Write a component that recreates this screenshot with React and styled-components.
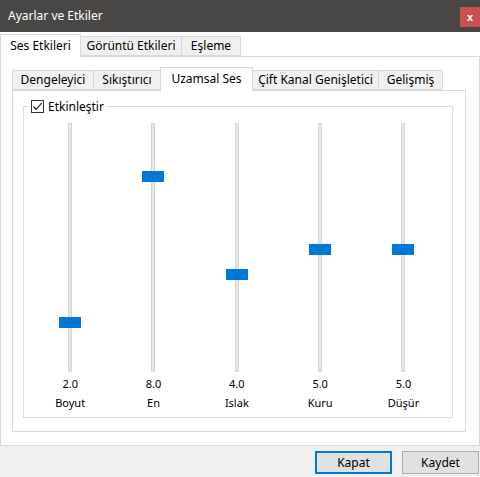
import React from 'react';
import styled, { createGlobalStyle } from 'styled-components';

const GlobalStyle = createGlobalStyle`
  html, body { margin: 0; padding: 0; background: #f0f0f0; }
  body { font-family: 'Segoe UI', 'Noto Sans', sans-serif; font-size: 12px; color: #000; }
  * { box-sizing: border-box; }
`;

const OUTER_TABS = [
  { label: 'Ses Etkileri', width: 81, active: true },
  { label: 'Görüntü Etkileri', width: 102 },
  { label: 'Eşleme', width: 60 },
];

const INNER_TABS = [
  { label: 'Dengeleyici', width: 82 },
  { label: 'Sıkıştırıcı', width: 68 },
  { label: 'Uzamsal Ses', width: 93, active: true },
  { label: 'Çift Kanal Genişletici', width: 127 },
  { label: 'Gelişmiş', width: 65 },
];

const SLIDERS = [
  { label: 'Boyut', value: 2 },
  { label: 'En', value: 8 },
  { label: 'Islak', value: 4 },
  { label: 'Kuru', value: 5 },
  { label: 'Düşür', value: 5 },
];

const Window = styled.div`
  width: 480px;
  height: 477px;
  display: flex;
  flex-direction: column;
  background: #f0f0f0;
  overflow: hidden;
`;

const TitleBar = styled.div`
  height: 32px;
  flex: none;
  display: flex;
  justify-content: space-between;
  background: #494745;
  color: #fff;
`;

const Title = styled.div`
  padding-left: 8px;
  line-height: 32px;
  font-size: 12px;
`;

const CloseButton = styled.div`
  width: 20px;
  height: 20px;
  margin-top: 7px;
  background: #c75050;
  color: #fff;
  font-size: 11px;
  font-weight: 700;
  display: flex;
  align-items: center;
  justify-content: center;
  font-family: 'Liberation Sans', sans-serif;
`;

const TabStrip = styled.div`
  height: ${({ $height }) => $height}px;
  flex: none;
  display: flex;
  align-items: flex-end;
  background: #fff;
`;

const Tab = styled.div`
  width: ${({ $width }) => $width}px;
  height: ${({ $active, $tall }) => ($active ? $tall : 20)}px;
  margin-left: -1px;
  margin-bottom: ${({ $active }) => ($active ? -1 : 0)}px;
  &:first-child { margin-left: 0; }
  position: relative;
  z-index: ${({ $active }) => ($active ? 1 : 0)};
  display: flex;
  align-items: ${({ $active }) => ($active ? 'flex-start' : 'center')};
  padding-top: ${({ $active }) => ($active ? 3 : 0)}px;
  justify-content: center;
  background: ${({ $active }) => ($active ? '#fff' : '#f0f0f0')};
  border: 1px solid #d9d9d9;
  border-bottom: ${({ $active }) => ($active ? 'none' : '1px solid #d9d9d9')};
  white-space: nowrap;
  line-height: 16px;
`;

const OuterPanel = styled.div`
  height: 390px;
  flex: none;
  background: #fff;
  border: 1px solid #d9d9d9;
  padding: 10px 13px 13px 11px;
  display: flex;
  flex-direction: column;
`;

const InnerPanel = styled.div`
  flex: 1;
  background: #fff;
  border: 1px solid #d9d9d9;
  padding: 9px 12px 13px 10px;
  display: flex;
`;

const GroupBox = styled.fieldset`
  flex: 1;
  margin: 0;
  padding: 0 0 6px;
  border: 1px solid #dcdcdc;
  min-width: 0;
`;

const Legend = styled.legend`
  margin-left: 5px;
  padding: 0 3px 0 2px;
  height: 13px;
  display: flex;
  align-items: center;
  gap: 4px;
  line-height: 13px;
`;

const CheckBox = styled.span`
  width: 13px;
  height: 13px;
  border: 1px solid #333;
  background: #fff;
  display: flex;
  align-items: center;
  justify-content: center;
`;

const SliderRow = styled.div`
  display: grid;
  grid-template-columns: repeat(5, 83.33px);
  padding: 10px 0 0 4.5px;
`;

const SliderColumn = styled.div`
  display: flex;
  flex-direction: column;
  align-items: center;
`;

const Track = styled.div`
  position: relative;
  width: 4px;
  height: 249px;
  background: #e7e7e7;
  border: 1px solid #d6d6d6;
`;

const Thumb = styled.div`
  position: absolute;
  left: 50%;
  width: 22px;
  height: 11px;
  margin-left: -11px;
  background: #0078d7;
`;

const SliderText = styled.div`
  margin-top: 5px;
  font-size: 11px;
  line-height: 14px;
`;

const ButtonBar = styled.div`
  flex: 1;
  display: flex;
  justify-content: flex-end;
  align-items: flex-start;
  gap: 10px;
  padding: 5px 1px 0 0;
`;

const Button = styled.button`
  width: ${({ $width }) => $width}px;
  height: 23px;
  margin: 0;
  padding: 0;
  font: inherit;
  font-size: 12px;
  color: #000;
  background: #e1e1e1;
  border: ${({ $primary }) => ($primary ? '2px solid #0078d7' : '1px solid #adadad')};
`;

const thumbTop = (value) => Math.round(242.3 - 24.43 * value);

function Slider({ label, value }) {
  return (
    <SliderColumn>
      <Track>
        <Thumb style={{ top: thumbTop(value) }} />
      </Track>
      <SliderText>{value.toFixed(1)}</SliderText>
      <SliderText>{label}</SliderText>
    </SliderColumn>
  );
}

export default function App() {
  return (
    <>
      <GlobalStyle />
      <Window>
        <TitleBar>
          <Title>Ayarlar ve Etkiler</Title>
          <CloseButton>x</CloseButton>
        </TitleBar>

        <TabStrip $height={24}>
          {OUTER_TABS.map((t) => (
            <Tab key={t.label} $width={t.width} $active={t.active} $tall={23}>
              {t.label}
            </Tab>
          ))}
        </TabStrip>

        <OuterPanel>
          <TabStrip $height={23}>
            {INNER_TABS.map((t) => (
              <Tab key={t.label} $width={t.width} $active={t.active} $tall={24}>
                {t.label}
              </Tab>
            ))}
          </TabStrip>
          <InnerPanel>
            <GroupBox>
              <Legend>
                <CheckBox>
                  <svg width="11" height="11" viewBox="0 0 11 11">
                    <path d="M1.5 5.5 L4.2 8.3 L9.6 2.2" fill="none" stroke="#222" strokeWidth="1.2" />
                  </svg>
                </CheckBox>
                Etkinleştir
              </Legend>
              <SliderRow>
                {SLIDERS.map((s) => (
                  <Slider key={s.label} {...s} />
                ))}
              </SliderRow>
            </GroupBox>
          </InnerPanel>
        </OuterPanel>

        <ButtonBar>
          <Button $primary $width={77}>Kapat</Button>
          <Button $width={77}>Kaydet</Button>
        </ButtonBar>
      </Window>
    </>
  );
}
